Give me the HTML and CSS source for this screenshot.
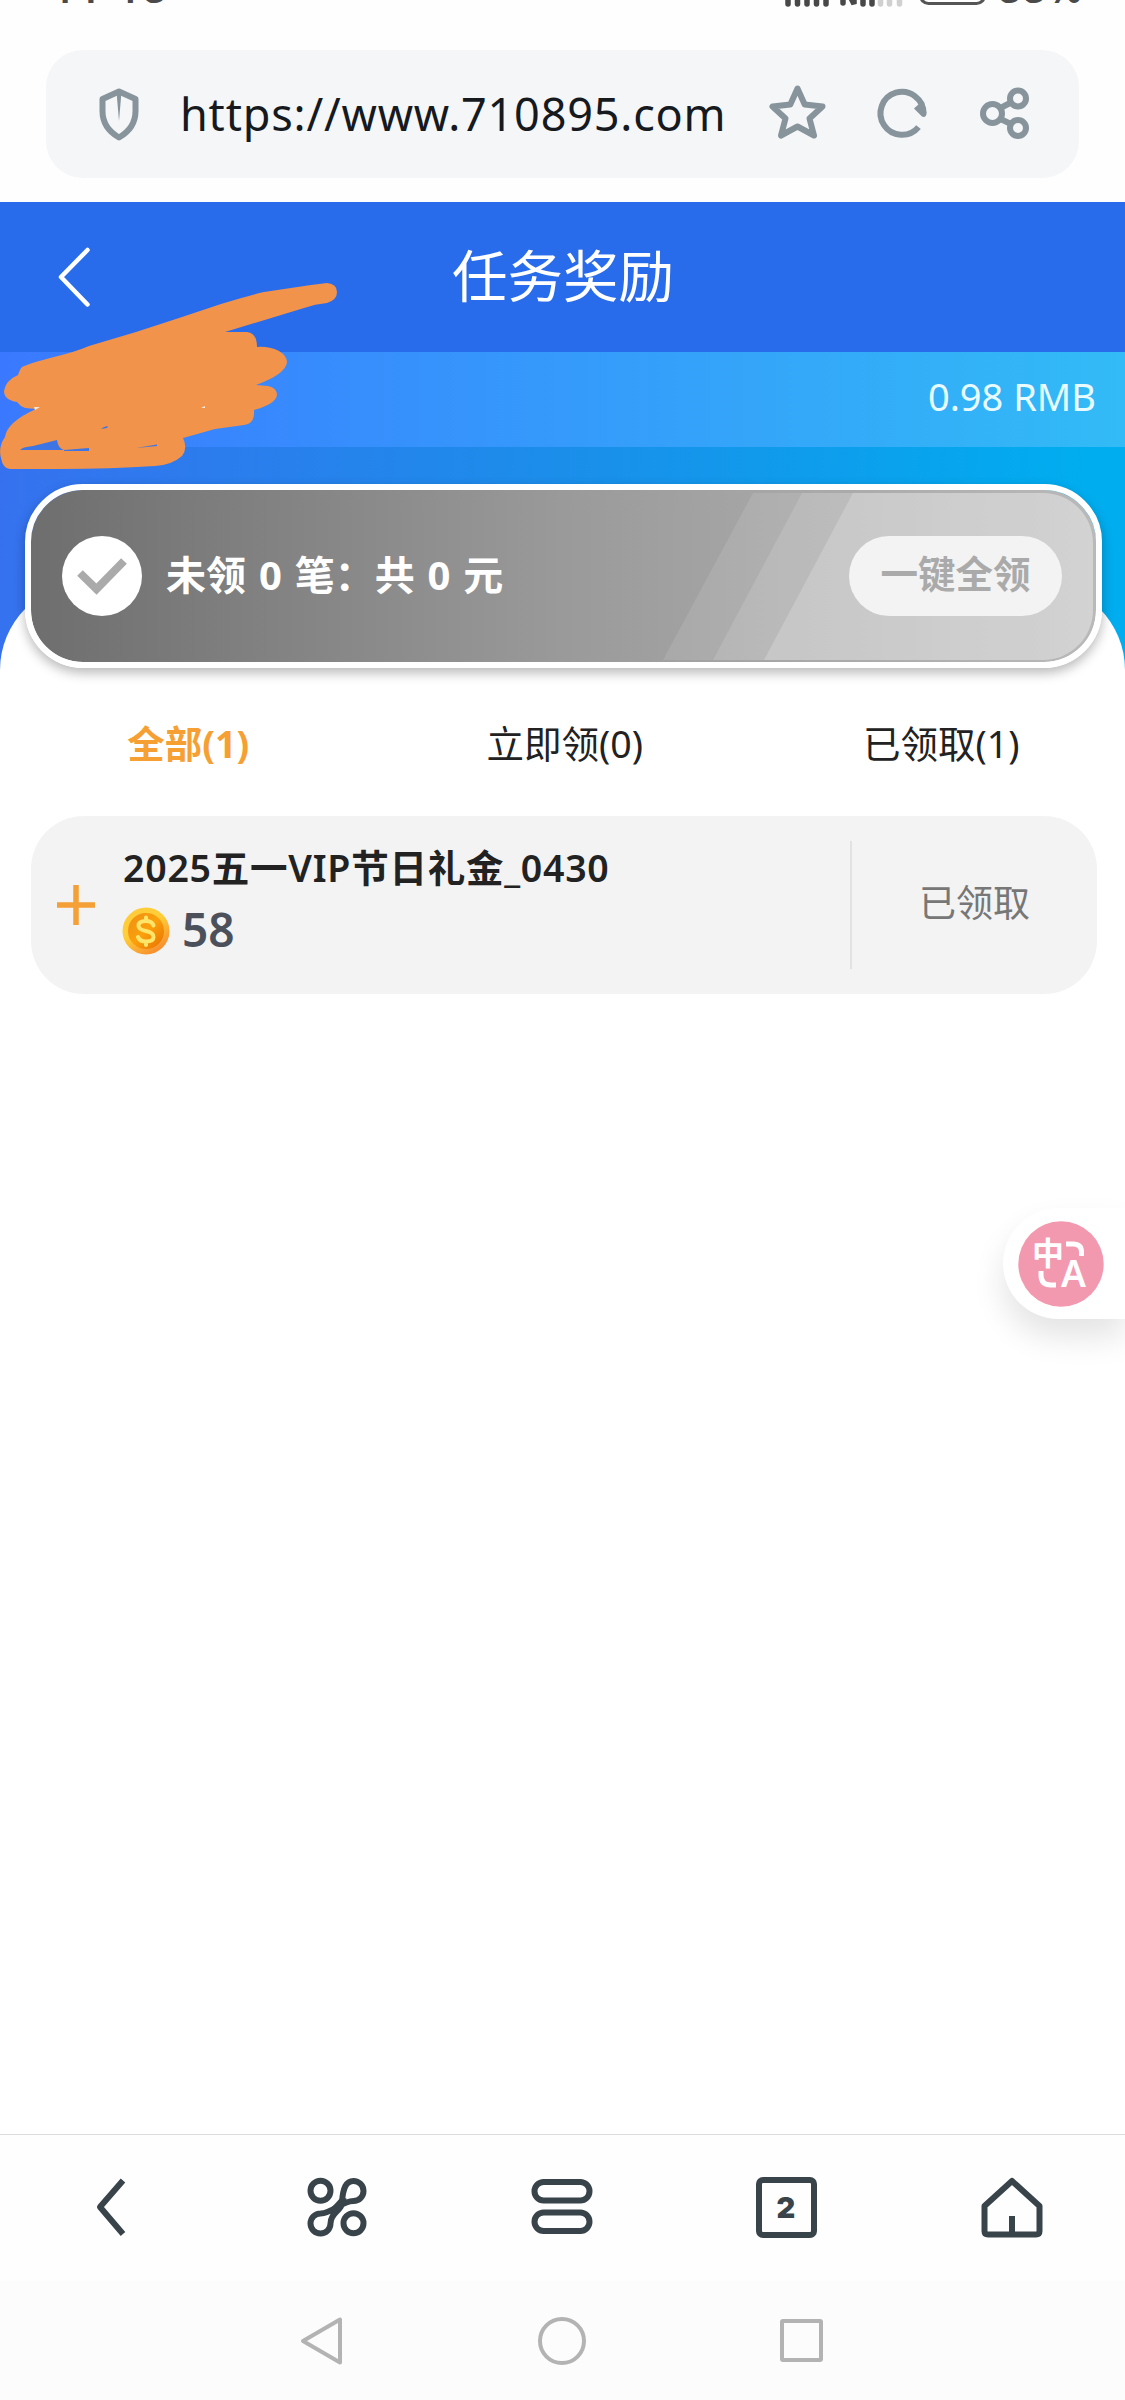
FILE: index.html
```html
<!DOCTYPE html>
<html lang="zh-CN">
<head>
<meta charset="utf-8">
<title>任务奖励</title>
<link rel="stylesheet" href="styles.css">
</head>
<body>
<div class="phone">
  <header class="status">
    <svg width="1125" height="50" viewBox="0 0 1125 50">
      <g class="status-text">
        <text x="52" y="3" textLength="114">11<tspan dy="-6">:</tspan><tspan dy="6">18</tspan></text>
        <text x="998" y="3" textLength="84">88%</text>
      </g>
      <g class="bars">
        <path d="M788 -10V4M797.500-10V4M807-10V4M816.500-10V4M826-10V4M843-10V3M850-4l4 8V-10M863-10V4M872-10V4"/>
        <path class="dim" d="M880.500-10V4M889.500-10V4M899.500-10V4"/>
      </g>
      <rect class="battery" x="920.500" y="-25" width="64" height="28.500" rx="8"/>
    </svg>
  </header>

  <div class="address">
    <svg class="shield" width="42" height="54" viewBox="0 0 42 54">
      <path class="shield-line" d="M21 4.500L37.500 12V24Q37.500 41 21 50.500Q4.500 41 4.500 24V12Z"/>
      <path class="solid" d="M18.500 5H23.500L21 34Z"/>
    </svg>
    <span class="url">https://www.710895.com</span>
    <svg class="tools" width="262" height="60" viewBox="0 0 262 60">
      <path class="line6" d="M29.500 5.500L36.700 21.500L54.500 23.500L41.500 35.500L46 52.500L29.500 43.500L13 52.500L17.500 35.500L4.500 23.500L22.300 21.500Z"/>
      <path class="line6" d="M150.500 44.100A21.500 21.500 0 1 1 155.500 30.300"/>
      <path class="solid" d="M146 25.600L151 21L156 18.600L158.500 30Q158.500 34 155.500 34Q154 34 152.500 32Z"/>
      <g class="line6"><circle cx="224.500" cy="30.500" r="9.500"/><circle cx="250" cy="15.500" r="8"/><circle cx="250" cy="45" r="8"/><path d="M232.500 25L243 19.500M232.500 36L243 41"/></g>
    </svg>
  </div>

  <main class="app">
    <div class="titlebar">
      <svg class="back" width="36" height="62" viewBox="0 0 36 62"><path d="M31.500 4L5 31L31.500 58.500"/></svg>
      <h1>任务奖励</h1>
    </div>
    <div class="balance"><span>0.98 RMB</span></div>
    <svg class="scribble" width="345" height="480" viewBox="0 0 345 480">
      <path class="ink" d="M22 367Q30 363 54 357Q75 352 89 346L136 332L179 318L221 304Q250 295 264 292L311 285L327 283Q337 284 337 292Q337 300 327 303Q315 304 304 308L225 332L247 332Q257 333 257 347Q268 346 279 351Q287 356 287 362Q286 374 256 385L268 386Q277 388 277 395Q276 404 254 410Q255 424 244 425L215 429L183 438Q188 448 182 456Q172 465 155 466Q110 469 60 469H10Q3 469 1 458Q-2 447 5 437Q7 422 36 409L25 408Q20 406 17 402Q4 400 4 391Q6 380 18 375Q20 369 22 367Z"/>
      <path class="gap" d="M20 450Q22 447 33 446L57 440Q58 448 64 450ZM64 450L89 448V451H64ZM101 429L104 427L108 426L107 428ZM136 448L157 444.500L157 446Z"/>
      <path class="spark" d="M34 407H40L35 410ZM201 408L205 406L205 408Z"/>
    </svg>

    <section class="sheet">
      <div class="claim">
        <svg class="sheen" width="1066" height="172" viewBox="0 0 1066 172">
          <path class="s1" d="M722 3H1012A50 50 0 0 1 1062 53V120A50 50 0 0 1 1012 170H632Z"/>
          <path class="s2" d="M771 3H1012A50 50 0 0 1 1062 53V120A50 50 0 0 1 1012 170H682Z"/>
          <path class="s3" d="M822 3H1012A50 50 0 0 1 1062 53V120A50 50 0 0 1 1012 170H733Z"/>
        </svg>
        <svg class="check" width="80" height="80" viewBox="0 0 80 80"><circle cx="40" cy="40" r="40"/><path d="M18 37L34.500 53L62 25"/></svg>
        <span class="claim-text">未领 0 笔：共 0 元</span>
        <span class="claim-all">一键全领</span>
      </div>

      <nav class="tabs">
        <span class="on">全部(1)</span><span>立即领(0)</span><span>已领取(1)</span>
      </nav>

      <article class="reward">
        <svg class="plus" width="38" height="40" viewBox="0 0 38 40"><path d="M0 20H38M19 0V40"/></svg>
        <div class="info">
          <div class="name">2025五一VIP节日礼金_0430</div>
          <div class="amount">
            <svg width="48" height="48" viewBox="0 0 48 48">
              <defs>
                <linearGradient id="rim" x1="0" y1="0" x2=".6" y2="1"><stop offset="0" stop-color="#ffca3a"/><stop offset=".5" stop-color="#ffcf38"/><stop offset="1" stop-color="#f7902f"/></linearGradient>
                <linearGradient id="face" x1="0" y1="0" x2="1" y2="1"><stop offset="0" stop-color="#ee8f12"/><stop offset=".5" stop-color="#fba00d"/><stop offset="1" stop-color="#e67000"/></linearGradient>
              </defs>
              <circle cx="24" cy="24" r="23.500" fill="url(#rim)"/><circle cx="24" cy="24" r="18" fill="url(#face)"/>
              <path class="dollar" d="M31.500 18.500Q30 14 24 14Q16.500 14 16.500 18.700Q16.500 22.500 24 24Q31.500 25.500 31.500 30Q31.500 34.500 24 34.500Q17.500 34.500 16 30M24 10.500V13M24 35V38"/>
            </svg>
            <b>58</b>
          </div>
        </div>
        <div class="state">已领取</div>
      </article>
    </section>
  </main>

  <nav class="browser-nav">
    <svg width="64" height="64" viewBox="0 0 64 64"><path d="M43 5.500L20 32L43 59"/></svg>
    <svg width="64" height="64" viewBox="0 0 64 64"><circle cx="15.500" cy="15.700" r="10"/><circle cx="48.500" cy="48.300" r="10"/><path d="M37 27C38 13 41 6 48.500 6A10 10 0 0 1 48.500 26C36 26 28 38 15.500 38.500A10 10 0 1 0 25.500 48.500C26 36 37 38 38.500 23"/><path class="join" d="M26 39L38 26"/></svg>
    <svg width="64" height="64" viewBox="0 0 64 64"><rect x="4.500" y="7" width="55" height="18.500" rx="9.200"/><rect x="4.500" y="37.500" width="55" height="18.500" rx="9.200"/></svg>
    <span class="tab-count">2</span>
    <svg width="64" height="64" viewBox="0 0 64 64"><path d="M32 6L59.500 31V56Q59.500 59.500 56 59.500H8Q4.500 59.500 4.500 56V31ZM32 59V41"/></svg>
  </nav>

  <footer class="system-nav">
    <svg width="48" height="50" viewBox="0 0 48 50"><path d="M5 25L42 3.500V46.500Z"/></svg>
    <svg width="48" height="50" viewBox="0 0 48 50"><circle cx="24" cy="25" r="22"/></svg>
    <svg width="48" height="50" viewBox="0 0 48 50"><rect x="4" y="5" width="39" height="39" rx="1"/></svg>
  </footer>

  <aside class="translate">
    <svg width="86" height="86" viewBox="0 0 86 86">
      <circle cx="43" cy="43" r="42.700"/>
      <text class="zh" x="14" y="44">中</text>
      <text class="en" x="43" y="66" textLength="25" lengthAdjust="spacingAndGlyphs">A</text>
      <path d="M48 23H55Q63.500 23 63.500 31V35M23 50V54Q23 64 33 64H38"/>
    </svg>
  </aside>
</div>
</body>
</html>
```

FILE: styles.css
```css
* { box-sizing: border-box; }
body { margin: 0; background: #fefefe; }
svg { display: block; flex: none; }

.phone {
  position: relative;
  display: flex;
  flex-direction: column;
  width: 1125px;
  height: 2400px;
  overflow: hidden;
  font-family: "Noto Sans", "Noto Sans CJK SC", sans-serif;
  color: #222;
}

/* status bar */
.status { height: 50px; flex: none; overflow: hidden; }
.status-text { font: 600 40px "Noto Sans", sans-serif; fill: #4a4a4a; }
.bars path { fill: none; stroke: #484848; stroke-width: 5.500; stroke-linecap: round; }
.bars .dim { stroke: #d0d0d0; }
.battery { fill: none; stroke: #555; stroke-width: 3; }

/* address bar */
.address {
  display: flex;
  align-items: center;
  flex: none;
  height: 128px;
  margin: 0 46px 24px;
  padding: 0 49px 0 52px;
  border-radius: 37px;
  background: #f4f6f8;
}
.shield { margin-top: -1px; }
.shield-line, .line6 { fill: none; stroke: #87949b; stroke-width: 6; stroke-linejoin: round; }
.solid { fill: #87949b; }
.url {
  flex: 1;
  margin: 0 0 0 40px;
  font-size: 45px;
  line-height: 60px;
  letter-spacing: .8px;
  color: #16191d;
  white-space: nowrap;
}
.tools { margin-top: -2px; }

/* page */
.app {
  position: relative;
  flex: 1;
  background: linear-gradient(92deg, #3671ef 0, #1b8eea 50%, #00adef 96%) 0 0 / 100% 500px no-repeat;
}
.titlebar {
  display: flex;
  align-items: center;
  height: 150px;
  padding-left: 56px;
  background: #286ceb;
}
.back path { fill: none; stroke: #fff; stroke-width: 4.500; stroke-linecap: round; stroke-linejoin: round; }
h1 {
  margin: -2px 0 0 360px;
  font-size: 55.500px;
  font-weight: 400;
  line-height: 80px;
  color: #fff;
}
.balance {
  display: flex;
  align-items: center;
  justify-content: flex-end;
  height: 95px;
  padding-right: 29px;
  background: linear-gradient(90deg, #3a79ff, #359afb 50%, #32bbf6);
  font-size: 38px;
  color: #e8fbff;
}
.balance span { margin-top: -7px; }
.scribble { position: absolute; left: 0; top: -202px; }
.ink { fill: #f2934c; }
.gap { fill: #3d76e4; }
.spark { fill: #fbe6d4; }

.sheet {
  margin-top: 136px;
  height: 1551px;
  border-radius: 87px 87px 0 0;
  background: #fff;
}

/* claim banner */
.claim {
  position: relative;
  top: -99px;
  display: flex;
  align-items: center;
  width: 1077px;
  height: 184px;
  margin: 0 0 -99px 25px;
  padding: 0 34px 0 31px;
  border: 6px solid #fff;
  border-radius: 58px;
  background: linear-gradient(90deg, #6e6e6e, #9a9a9a 50%, #b9b9b9) padding-box;
  box-shadow: 0 5px 12px rgba(0, 0, 0, .28);
}
.sheen { position: absolute; left: 0; top: 0; }
.sheen path { fill: #fff; }
.sheen .s1 { opacity: .1; }
.sheen .s2 { opacity: .13; }
.sheen .s3 { opacity: .2; }
.check { position: relative; }
.check circle { fill: #fff; }
.check path { fill: none; stroke: #aaa; stroke-width: 8; }
.claim-text {
  position: relative;
  flex: 1;
  margin: -3px 0 0 24px;
  font-size: 40px;
  font-weight: 700;
  line-height: 56px;
  word-spacing: 2.500px;
  color: #fff;
  white-space: nowrap;
}
.claim-all {
  position: relative;
  width: 213px;
  height: 80px;
  border-radius: 40px;
  background: #f3f3f3;
  font-size: 37.500px;
  font-weight: 700;
  line-height: 75px;
  text-align: center;
  color: #aaa;
}

.tabs {
  display: grid;
  grid-template-columns: repeat(3, 376.500px);
  margin-top: 46px;
  height: 60px;
  font-size: 37.500px;
  line-height: 60px;
  text-align: center;
}
.tabs .on { font-weight: 700; color: #f6a034; }

/* reward row */
.reward {
  display: flex;
  align-items: center;
  width: 1066px;
  height: 178px;
  margin: 42px 0 0 31px;
  padding-left: 26px;
  border-radius: 53px;
  background: #f3f3f3;
}
.plus path { stroke: #f5a037; stroke-width: 5.500; }
.info { flex: 1; margin-left: 27px; }
.name {
  margin: -8px 0 0 1px;
  font-size: 37.500px;
  font-weight: 600;
  line-height: 56px;
  letter-spacing: .75px;
  white-space: nowrap;
}
.amount { display: flex; align-items: center; height: 64px; margin-top: 3px; }
.amount b { margin: -4px 0 0 12px; font-size: 46px; font-weight: 600; line-height: 60px; color: #4b505b; }
.dollar { fill: none; stroke: #ffe66b; stroke-width: 4; stroke-linecap: round; }
.state {
  width: 247px;
  height: 128px;
  border-left: 2px solid #e2e2e2;
  font-size: 37px;
  line-height: 124px;
  text-align: center;
  color: #777;
}

/* browser toolbar */
.browser-nav {
  display: grid;
  grid-template-columns: repeat(5, 1fr);
  place-items: center;
  flex: none;
  height: 147px;
  padding: 0 1px 2px 0;
  border-top: 1px solid #dcdcdc;
  background: #fefefe;
}
.browser-nav svg { fill: none; stroke: #38434a; stroke-width: 6; stroke-linejoin: round; }
.browser-nav .join { stroke-width: 8; }
.tab-count {
  width: 61px;
  height: 61px;
  border: 6px solid #38434a;
  border-radius: 7px;
  font: 900 29px/49px Inter, sans-serif;
  text-align: center;
  color: #38434a;
  padding-right: 2px;
}

/* system buttons */
.system-nav {
  display: flex;
  justify-content: center;
  align-items: center;
  gap: 192px;
  flex: none;
  height: 120px;
  padding: 0 1px 1px 0;
  background: #fcfcfc;
}
.system-nav svg { fill: none; stroke: #b3b3b3; stroke-width: 4; stroke-linejoin: round; }

/* floating translate button */
.translate {
  position: absolute;
  right: 0;
  top: 1208px;
  display: flex;
  align-items: center;
  width: 122px;
  height: 111px;
  padding-left: 15px;
  border-radius: 56px 0 0 56px;
  background: #fff;
  box-shadow: 0 18px 32px rgba(0, 0, 0, .11);
}
.translate circle { fill: #f299b0; }
.translate text { fill: #fff; font-weight: 700; }
.translate .zh { font-size: 32px; font-family: "Noto Sans CJK SC", sans-serif; }
.translate .en { font-size: 38px; font-family: "Noto Sans", sans-serif; font-weight: 600; }
.translate path { fill: none; stroke: #fff; stroke-width: 5; }
```
